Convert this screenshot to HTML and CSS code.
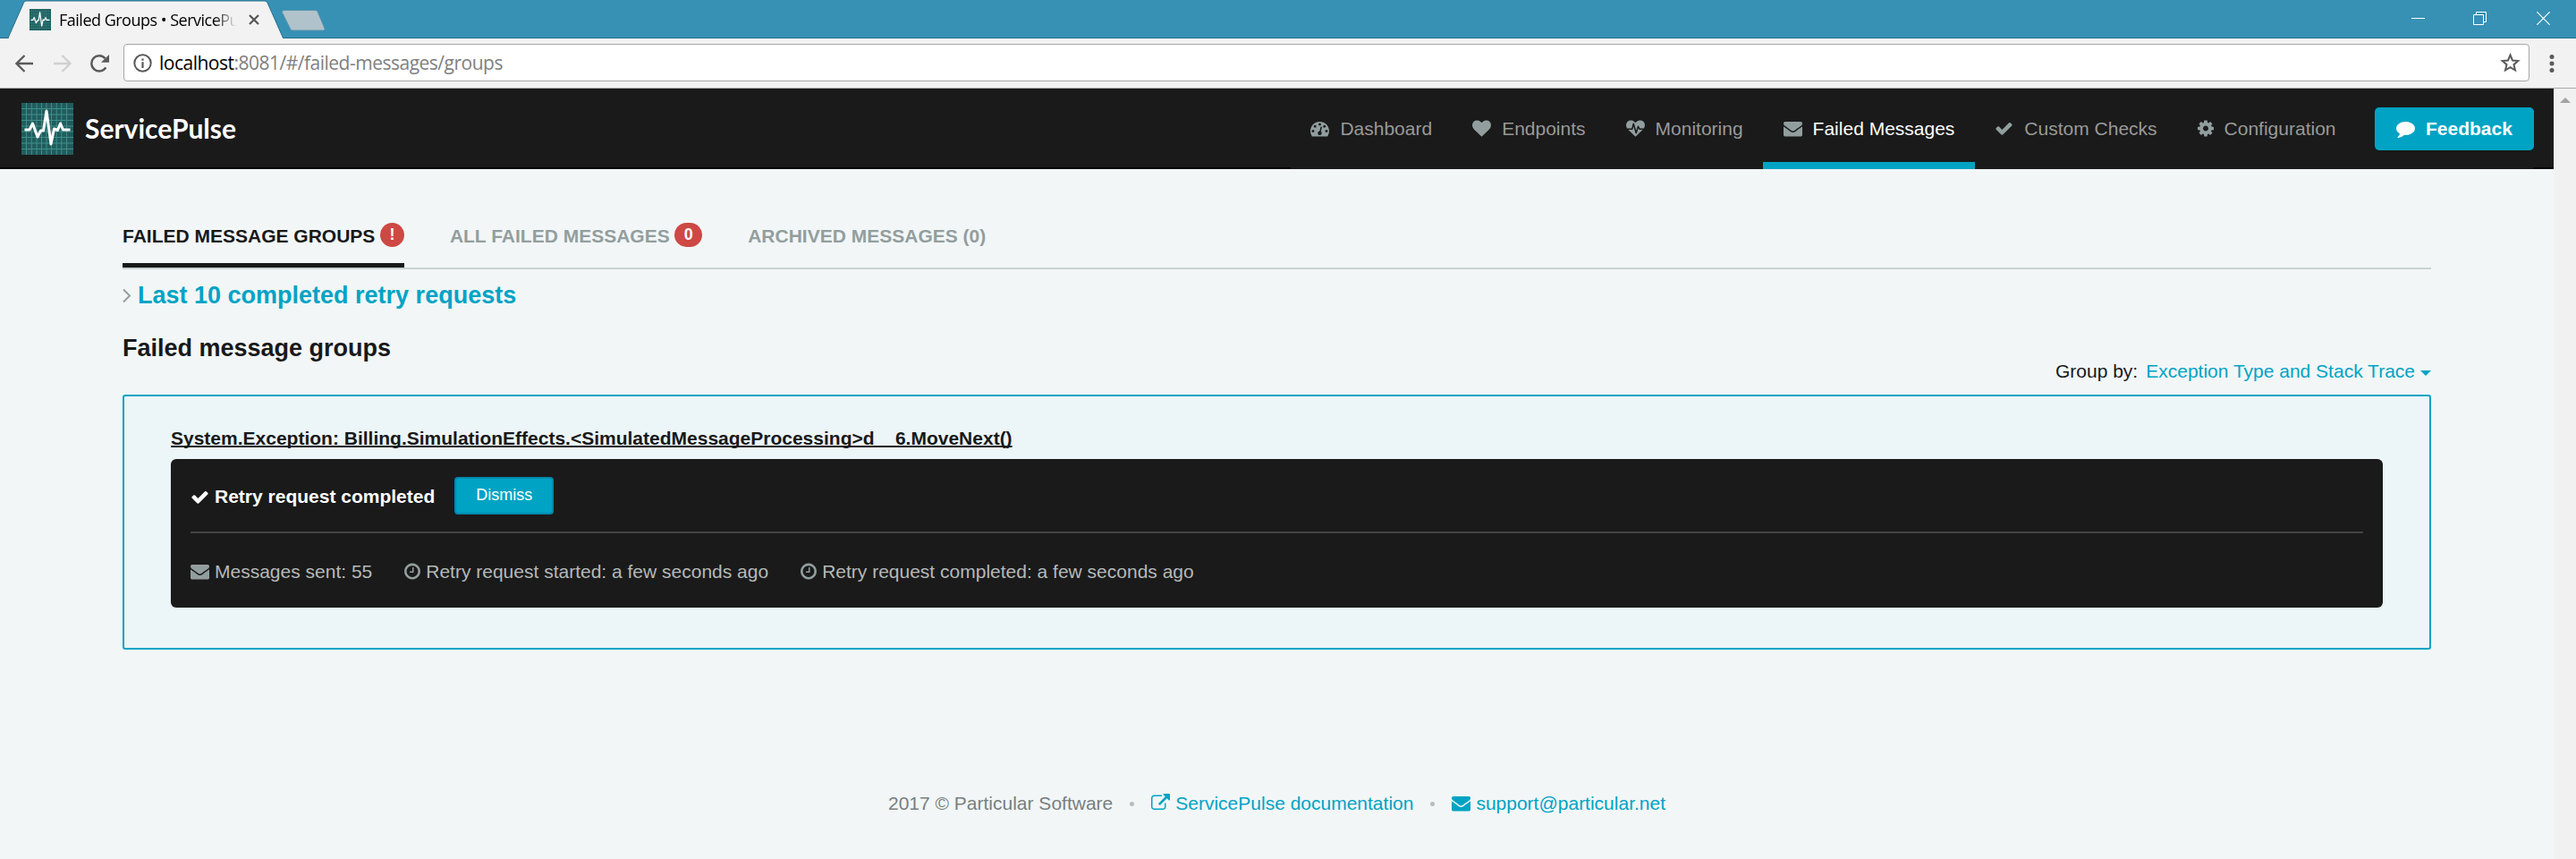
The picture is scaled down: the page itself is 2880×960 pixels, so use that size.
FILE: index.html
```html
<!DOCTYPE html>
<html lang="en">
<head>
<meta charset="utf-8">
<title>Failed Groups • ServicePulse</title>
<link rel="stylesheet" href="styles.css">
</head>
<body>
<svg width="0" height="0" class="defs" aria-hidden="true">
  <symbol id="check" viewBox="0 0 1792 1792"><path d="M1671 566q0 40-28 68l-724 724-136 136q-28 28-68 28t-68-28l-136-136-362-362q-28-28-28-68t28-68l136-136q28-28 68-28t68 28l294 295 656-657q28-28 68-28t68 28l136 136q28 28 28 68z"/></symbol>
  <symbol id="cog" viewBox="128 0 1536 1792"><path d="M1152 896q0-106-75-181t-181-75-181 75-75 181 75 181 181 75 181-75 75-181zm512-109v222q0 12-8 23t-20 13l-185 28q-19 54-39 91 35 50 107 138 10 12 10 25t-9 23q-27 37-99 108t-94 71q-12 0-26-9l-138-108q-44 23-91 38-16 136-29 186-7 28-36 28h-222q-14 0-24.5-8.5t-11.5-21.5l-28-184q-49-16-90-37l-141 107q-10 9-25 9-14 0-25-11-126-114-165-168-7-10-7-23 0-12 8-23 15-21 51-66.500t54-70.500q-27-50-41-99l-183-27q-13-2-21-12.500t-8-23.500v-222q0-12 8-23t19-13l186-28q14-46 39-92-40-57-107-138-10-12-10-24 0-10 9-23 26-36 98.500-107.500t94.500-71.500q13 0 26 10l138 107q44-23 91-38 16-136 29-186 7-28 36-28h222q14 0 24.500 8.500t11.500 21.500l28 184q49 16 90 37l142-107q9-9 24-9 13 0 25 10 129 119 165 170 7 8 7 22 0 12-8 23-15 21-51 66.500t-54 70.500q26 50 41 98l183 28q13 2 21 12.500t8 23.500z"/></symbol>
  <symbol id="envelope" viewBox="0 0 1792 1792"><path d="M1792 710v794q0 66-47 113t-113 47h-1472q-66 0-113-47t-47-113v-794q44 49 101 87 362 246 497 345 57 42 92.500 65.500t94.500 48 110 24.500h2q51 0 110-24.500t94.500-48 92.500-65.500q170-123 498-345 57-39 100-87zm0-294q0 79-49 151t-122 123q-376 261-468 325-10 7-42.500 31t-54 38.500-52 32.500-57.500 27-50 9h-2q-23 0-50-9t-57.500-27-52-32.500-54-38.500-42.500-31q-91-64-262-182.500t-205-142.500q-62-42-117-115.500t-55-136.500q0-78 41.500-130t118.500-52h1472q65 0 112.500 47t47.500 113z"/></symbol>
  <symbol id="heart" viewBox="0 0 1792 1792"><path d="M896 1664q-26 0-44-18l-624-602q-10-8-27.500-26t-55.500-65.500-68-97.500-53.500-121-23.500-138q0-220 127-344t351-124q62 0 126.500 21.500t120 58 95.500 68.500 76 68q36-36 76-68t95.500-68.500 120-58 126.500-21.500q224 0 351 124t127 344q0 221-229 450l-623 600q-18 18-44 18z"/></symbol>
  <symbol id="heartbeat" viewBox="0 0 1792 1792"><path d="M1280 1024h305q-5 6-10 10.500t-9 7.500l-3 4-623 600q-18 18-44 18t-44-18l-624-602q-5-2-21-20h369q22 0 39.500-13.500t22.500-34.500l70-281 190 667q6 20 23 33t39 13q21 0 38-13t23-33l146-485 56 112q18 35 57 35zm512-428q0 145-103 300h-369l-111-221q-8-17-25.500-27t-36.500-8q-45 5-56 46l-129 430-196-686q-6-20-23.500-33t-39.500-13-39 13.500-22 34.500l-116 464h-423q-103-155-103-300 0-220 127-344t351-124q62 0 126.500 21.500t120 58 95.500 68.500 76 68q36-36 76-68t95.500-68.500 120-58 126.500-21.500q224 0 351 124t127 344z"/></symbol>
  <symbol id="gauge" viewBox="0 0 1792 1792"><path fill-rule="evenodd" d="M384 1152q0-53-37.500-90.500t-90.500-37.500-90.500 37.500-37.500 90.500 37.500 90.500 90.500 37.500 90.500-37.500 37.500-90.500zm192-448q0-53-37.500-90.500t-90.500-37.500-90.500 37.500-37.500 90.500 37.500 90.500 90.500 37.500 90.500-37.500 37.500-90.500zm428 481l101-382q6-26-7.500-48.500t-38.500-29.500-48 6.500-30 39.500l-101 382q-60 5-107 43.500t-63 98.500q-20 77 20 146t117 89 146-20 89-117q16-60-6-117t-72-91zm660-33q0-53-37.500-90.500t-90.500-37.500-90.500 37.500-37.500 90.500 37.500 90.500 90.500 37.500 90.500-37.500 37.500-90.500zm-640-640q0-53-37.500-90.500t-90.500-37.500-90.500 37.500-37.500 90.500 37.500 90.500 90.500 37.500 90.500-37.500 37.500-90.500zm448 192q0-53-37.500-90.500t-90.500-37.500-90.500 37.500-37.500 90.500 37.500 90.500 90.500 37.500 90.500-37.500 37.500-90.500zm320 448q0 261-141 483-19 29-54 29h-1402q-35 0-54-29-141-221-141-483 0-182 71-348t191-286 286-191 348-71 348 71 286 191 191 286 71 348z"/></symbol>
  <symbol id="comment" viewBox="0 0 1792 1792"><path d="M1792 896q0 174-120 321.500t-326 233-450 85.500q-70 0-145-8-198 175-460 242-49 14-114 22-17 2-30.500-9t-17.500-29v-1q-3-4-.5-12t2-10 4.500-9.500l6-9 7-8.500 8-9q7-8 31-34.500t34.500-38 31-39.500 32.500-51 27-59 26-76q-157-89-247.500-220t-90.500-281q0-130 71-248.500t191-204.500 286-136.500 348-50.500q244 0 450 85.500t326 233 120 321.500z"/></symbol>
  <symbol id="clock" viewBox="128 0 1536 1792"><path d="M1024 544v448q0 14-9 23t-23 9h-320q-14 0-23-9t-9-23v-64q0-14 9-23t23-9h224v-352q0-14 9-23t23-9h64q14 0 23 9t9 23zm416 352q0-148-73-273t-198-198-273-73-273 73-198 198-73 273 73 273 198 198 273 73 273-73 198-198 73-273zm224 0q0 209-103 385.500t-279.500 279.500-385.500 103-385.500-103-279.500-279.500-103-385.500 103-385.500 279.500-279.500 385.500-103 385.500 103 279.500 279.500 103 385.500z"/></symbol>
  <symbol id="external" viewBox="0 0 1792 1792"><path d="M1408 928v320q0 119-84.500 203.500t-203.500 84.500h-832q-119 0-203.500-84.500t-84.500-203.500v-832q0-119 84.500-203.500t203.500-84.500h704q14 0 23 9t9 23v64q0 14-9 23t-23 9h-704q-66 0-113 47t-47 113v832q0 66 47 113t113 47h832q66 0 113-47t47-113v-320q0-14 9-23t23-9h64q14 0 23 9t9 23zm384-864v512q0 26-19 45t-45 19-45-19l-176-176-652 652q-10 10-23 10t-23-10l-114-114q-10-10-10-23t10-23l652-652-176-176q-19-19-19-45t19-45 45-19h512q26 0 45 19t19 45z"/></symbol>
  <symbol id="pulse" viewBox="0 0 58 58"><rect width="58" height="58" fill="#215c5c"/><path d="M5.500 0v58M11.300 0v58M17 0v58M22.500 0v58M28 0v58M33.500 0v58M39.200 0v58M44.800 0v58M50.500 0v58M0 6.500h58M0 13h58M0 19.500h58M0 26h58M0 32h58M0 38.500h58M0 45h58M0 51.500h58" stroke="#3c908c" stroke-width="1"/><path d="M3.500 30H9L12.500 23 18 38 21.500 31H24.500L28 9 33 46 36.500 29 40.500 30.500 43.500 23 46.500 30H54.500" fill="none" stroke="#fff" stroke-width="3" stroke-linejoin="round"/></symbol>
</svg>

<div class="tabstrip">
  <svg class="tabshape" width="380" height="43" viewBox="0 0 380 43"><path d="M0 42.500H9L26.500 3Q27.500 1 29.500 1H295.500Q298 1 299 3L316.500 42.500H380" fill="#f2f2f2" stroke="#2b6f8c"/><path d="M10 42H316V43H10z" fill="#f2f2f2"/><path d="M317.500 11.500H353Q354.500 11.500 355 13L363 32Q363.500 34 361.500 34H327Q325.500 34 325 33L315.500 14Q315 11.500 317.500 11.500z" fill="#b0c3cb" stroke="#5b93ab"/></svg>
  <div class="tab">
    <svg class="favicon" width="24" height="24"><use href="#pulse"/></svg>
    <span class="tabtitle">Failed Groups • ServicePulse</span>
    <svg width="12" height="12" viewBox="0 0 12 12"><path d="M1 1l10 10M11 1L1 11" stroke="#555" stroke-width="2.200"/></svg>
  </div>
  <div class="winbtns">
    <svg class="minimize" width="15" height="15"><path d="M0 7.500h15" stroke="#fff"/></svg>
    <svg width="15" height="15" fill="none" stroke="#fff"><path d="M.5 3.500h11v11H.5zM3.500 3.500v-3h11v11h-3"/></svg>
    <svg width="15" height="15"><path d="M.3 .3l14.400 14.400M14.700 .3L.3 14.700" stroke="#fff" stroke-width="1.200"/></svg>
  </div>
</div>

<div class="toolbar">
  <svg class="back" width="20" height="20" fill="none" stroke="#5a5a5a" stroke-width="2.300"><path d="M20 10H2M10.500 1L1.500 10l9 9"/></svg>
  <svg class="fwd" width="20" height="20" fill="none" stroke="#d0d0d0" stroke-width="2.300"><path d="M0 10h18M9.500 1l9 9-9 9"/></svg>
  <svg class="reload" width="22" height="20" viewBox="0 0 22 20"><path d="M17.300 14.300A8.600 8.600 0 1 1 16.500 4.300" fill="none" stroke="#5a5a5a" stroke-width="2.400"/><path d="M21 0v8.800h-9z" fill="#5a5a5a"/></svg>
  <div class="urlbar">
    <svg width="21" height="21" viewBox="0 0 21 21"><circle cx="10.500" cy="10.500" r="9.200" fill="none" stroke="#5a5a5a" stroke-width="2"/><path d="M9.400 9.300h2.200V16H9.400zM9.400 5.500h2.200v2.200H9.400z" fill="#5a5a5a"/></svg>
    <span class="url"><b>localhost</b>:8081/#/failed-messages/groups</span>
    <svg class="star" width="23" height="22" viewBox="0 0 23 22"><path d="M11.500 2.500l2.500 6 6.300.5-4.800 4.200 1.500 6.300-5.500-3.400-5.500 3.400 1.500-6.300L2.700 9l6.300-.5z" fill="none" stroke="#5a5a5a" stroke-width="2"/></svg>
  </div>
  <svg width="6" height="22" fill="#5a5a5a"><circle cx="3" cy="3.500" r="2.500"/><circle cx="3" cy="11" r="2.500"/><circle cx="3" cy="18.500" r="2.500"/></svg>
</div>

<div class="viewport">
  <div class="page">
    <header class="navbar">
      <svg class="logo" width="58" height="58"><use href="#pulse"/></svg>
      <span class="brand">ServicePulse</span>
      <nav class="menu">
        <a class="item"><svg width="21" height="21"><use href="#gauge"/></svg>Dashboard</a>
        <a class="item"><svg width="21" height="21"><use href="#heart"/></svg>Endpoints</a>
        <a class="item"><svg width="21" height="21"><use href="#heartbeat"/></svg>Monitoring</a>
        <a class="item active"><svg width="21" height="21"><use href="#envelope"/></svg>Failed Messages</a>
        <a class="item"><svg width="21" height="21"><use href="#check"/></svg>Custom Checks</a>
        <a class="item"><svg width="18" height="21"><use href="#cog"/></svg>Configuration</a>
        <a class="feedback"><svg width="21" height="21"><use href="#comment"/></svg>Feedback</a>
      </nav>
    </header>

    <main class="container">
      <div class="tabs">
        <a class="tablink current">FAILED MESSAGE GROUPS<span class="badge excl">!</span></a>
        <a class="tablink">ALL FAILED MESSAGES<span class="badge">0</span></a>
        <a class="tablink">ARCHIVED MESSAGES (0)</a>
      </div>
      <h2 class="history"><svg width="10" height="17" viewBox="0 0 10 17"><path d="M1 1.500l7 7-7 7" fill="none" stroke="#929e9e" stroke-width="1.900"/></svg><span>Last 10 completed retry requests</span></h2>
      <h2 class="heading">Failed message groups</h2>
      <div class="groupby">Group by:<a class="sel">Exception Type and Stack Trace</a><i class="caret"></i></div>
      <section class="group">
        <h3 class="title">System.Exception: Billing.SimulationEffects.&lt;SimulatedMessageProcessing&gt;d__6.MoveNext()</h3>
        <div class="panel">
          <div class="status"><svg width="21" height="21"><use href="#check"/></svg><strong>Retry request completed</strong><button class="dismiss">Dismiss</button></div>
          <div class="meta">
            <span><svg width="21" height="21"><use href="#envelope"/></svg>Messages sent: 55</span>
            <span><svg width="18" height="21"><use href="#clock"/></svg>Retry request started: a few seconds ago</span>
            <span><svg width="18" height="21"><use href="#clock"/></svg>Retry request completed: a few seconds ago</span>
          </div>
        </div>
      </section>
    </main>

    <footer class="footer">
      <span>2017 © Particular Software</span><i class="dot"></i>
      <a><svg width="21" height="21"><use href="#external"/></svg>ServicePulse documentation</a><i class="dot"></i>
      <a><svg width="21" height="21"><use href="#envelope"/></svg>support@particular.net</a>
    </footer>
  </div>
  <div class="scrollbar"><svg width="12" height="6"><path d="M6 0l6 6H0z" fill="#a3a3a3"/></svg></div>
</div>
</body>
</html>
```
FILE: styles.css
```css
* { box-sizing: border-box; }
body { margin: 0; width: 2880px; height: 960px; overflow: hidden; display: flex; flex-direction: column; background: #f2f6f7; color: #181919; fill: currentColor; font: 21px/30px "Liberation Sans", Arial, sans-serif; }
svg { display: block; flex: none; }
.defs { position: absolute; }

.tabstrip { position: relative; height: 43px; flex: none; background: #3691b5; box-shadow: inset 0 -1px #2b6f8c; display: flex; justify-content: space-between; }
.tabshape { position: absolute; left: 0; top: 0; }
.tab { position: relative; display: flex; align-items: center; height: 43px; padding-left: 33px; }
.favicon { margin-top: 1px; }
.tabtitle { width: 198px; margin: 0 14px 0 9px; overflow: hidden; white-space: nowrap; font: 18px/26px "Open Sans", sans-serif; letter-spacing: -.5px; color: #000; -webkit-mask-image: linear-gradient(90deg, #000 88%, transparent); mask-image: linear-gradient(90deg, #000 88%, transparent); }
.winbtns { display: flex; gap: 56px; padding: 13px 29px 0 0; }
.minimize { margin-right: -2px; }

.toolbar { height: 56px; flex: none; background: #f2f2f2; border-bottom: 1px solid #aaa; display: flex; align-items: center; padding: 0 24px 0 17px; }
.fwd { margin-left: 23px; }
.reload { margin-left: 21px; }
.urlbar { flex: 1; height: 42px; margin: -1px 22px 0 15px; padding: 0 9px 0 10px; border: 1px solid #a6a6a6; border-radius: 4px; background: #fff; display: flex; align-items: center; }
.url { margin-left: 8px; font: 21px/30px "Open Sans", sans-serif; letter-spacing: -.5px; color: #808080; }
.url b { font-weight: 400; color: #000; }
.star { margin-left: auto; }

.viewport { flex: 1; display: flex; }
.page { width: 2855px; display: flex; flex-direction: column; }
.scrollbar { width: 25px; background: #f1f1f1; padding: 10px 0 0 7px; }

.navbar { height: 90px; background: #1a1a1a; border-bottom: 2px solid #000; display: flex; padding: 0 22px 0 24px; color: #929e9e; }
.logo { margin-top: 16px; }
.brand { margin: 26px 0 0 13px; font: 700 30px/36px Lato, sans-serif; color: #fff; }
.menu { display: flex; height: 90px; margin-left: auto; background: #1a1a1a; }
.item { display: flex; gap: 12px; padding: 30px 22.500px 0; height: 90px; color: #999; white-space: nowrap; }
.item svg { margin-top: 4px; color: #929e9e; }
.item.active { color: #fff; border-bottom: 8px solid #00a3c4; }
.feedback { display: flex; gap: 12px; height: 48px; width: 178px; margin: 21px 0 0 21px; padding: 9px 0 0 24px; border-radius: 5px; background: #00a3c4; color: #fff; font-weight: 700; }
.feedback svg { margin-top: 4px; }

.container { width: 2581px; margin-left: 137px; }
.tabs { display: flex; gap: 51px; height: 112px; border-bottom: 2px solid #cad2d2; font-weight: 700; color: #929e9e; }
.tablink { display: flex; height: 110px; padding-top: 60px; white-space: nowrap; }
.tablink.current { color: #181919; border-bottom: 5px solid #181919; }
.badge { width: 31px; height: 27px; margin: 0 0 0 5.500px; border-radius: 14px; background: #ce4844; color: #fff; font-size: 18px; line-height: 27px; text-align: center; }
.badge.excl { width: 27px; }
.history { display: flex; margin: 14px 0 0; font-size: 27px; line-height: 30px; color: #00a3c4; }
.history svg { margin: 7px 7px 0 0; }
.heading { margin: 29px 0 0; font-size: 27px; line-height: 30px; }
.groupby { display: flex; justify-content: flex-end; margin-top: -4px; }
.sel { margin: 0 6px 0 9px; color: #00a3c4; }
.caret { margin-top: 14px; border: 6px solid transparent; border-top-color: #00a3c4; border-bottom: 0; height: 6px; }
.group { margin-top: 11px; height: 285px; padding: 32px 52px 0; border: 2px solid #00a3c4; border-radius: 3px; background: #ecf5f7; }
.title { margin: 0; font-size: 21px; line-height: 30px; text-decoration: underline; text-decoration-thickness: 2px; text-decoration-skip-ink: none; }
.panel { height: 166px; margin-top: 8px; padding: 20px 22px 0; border-radius: 6px; background: #1a1a1a; box-shadow: 0 1px 2px rgba(0,0,0,.1); }
.status { display: flex; height: 63px; border-bottom: 2px solid #444; color: #fff; line-height: 44px; }
.status svg { margin: 12px 6px 0 0; }
.dismiss { width: 111px; height: 42px; margin-left: 22px; padding: 0 0 2px; border: 2px solid #0089ae; border-radius: 4px; background: #00a3c4; color: #fff; font: 18px/24px "Liberation Sans", Arial, sans-serif; }
.meta { display: flex; gap: 36px; padding-top: 28px; color: #b5b9b9; }
.meta span { display: flex; gap: 6px; }
.meta svg { margin-top: 4px; color: #929e9e; }

.footer { display: flex; justify-content: center; align-items: center; margin-top: 157px; color: #777f7f; }
.footer a { display: flex; gap: 6px; color: #00a3c4; }
.footer a svg { margin-top: 4px; }
.dot { width: 5px; height: 5px; border-radius: 50%; background: #b5bdbd; margin: 0 19px; }
```
